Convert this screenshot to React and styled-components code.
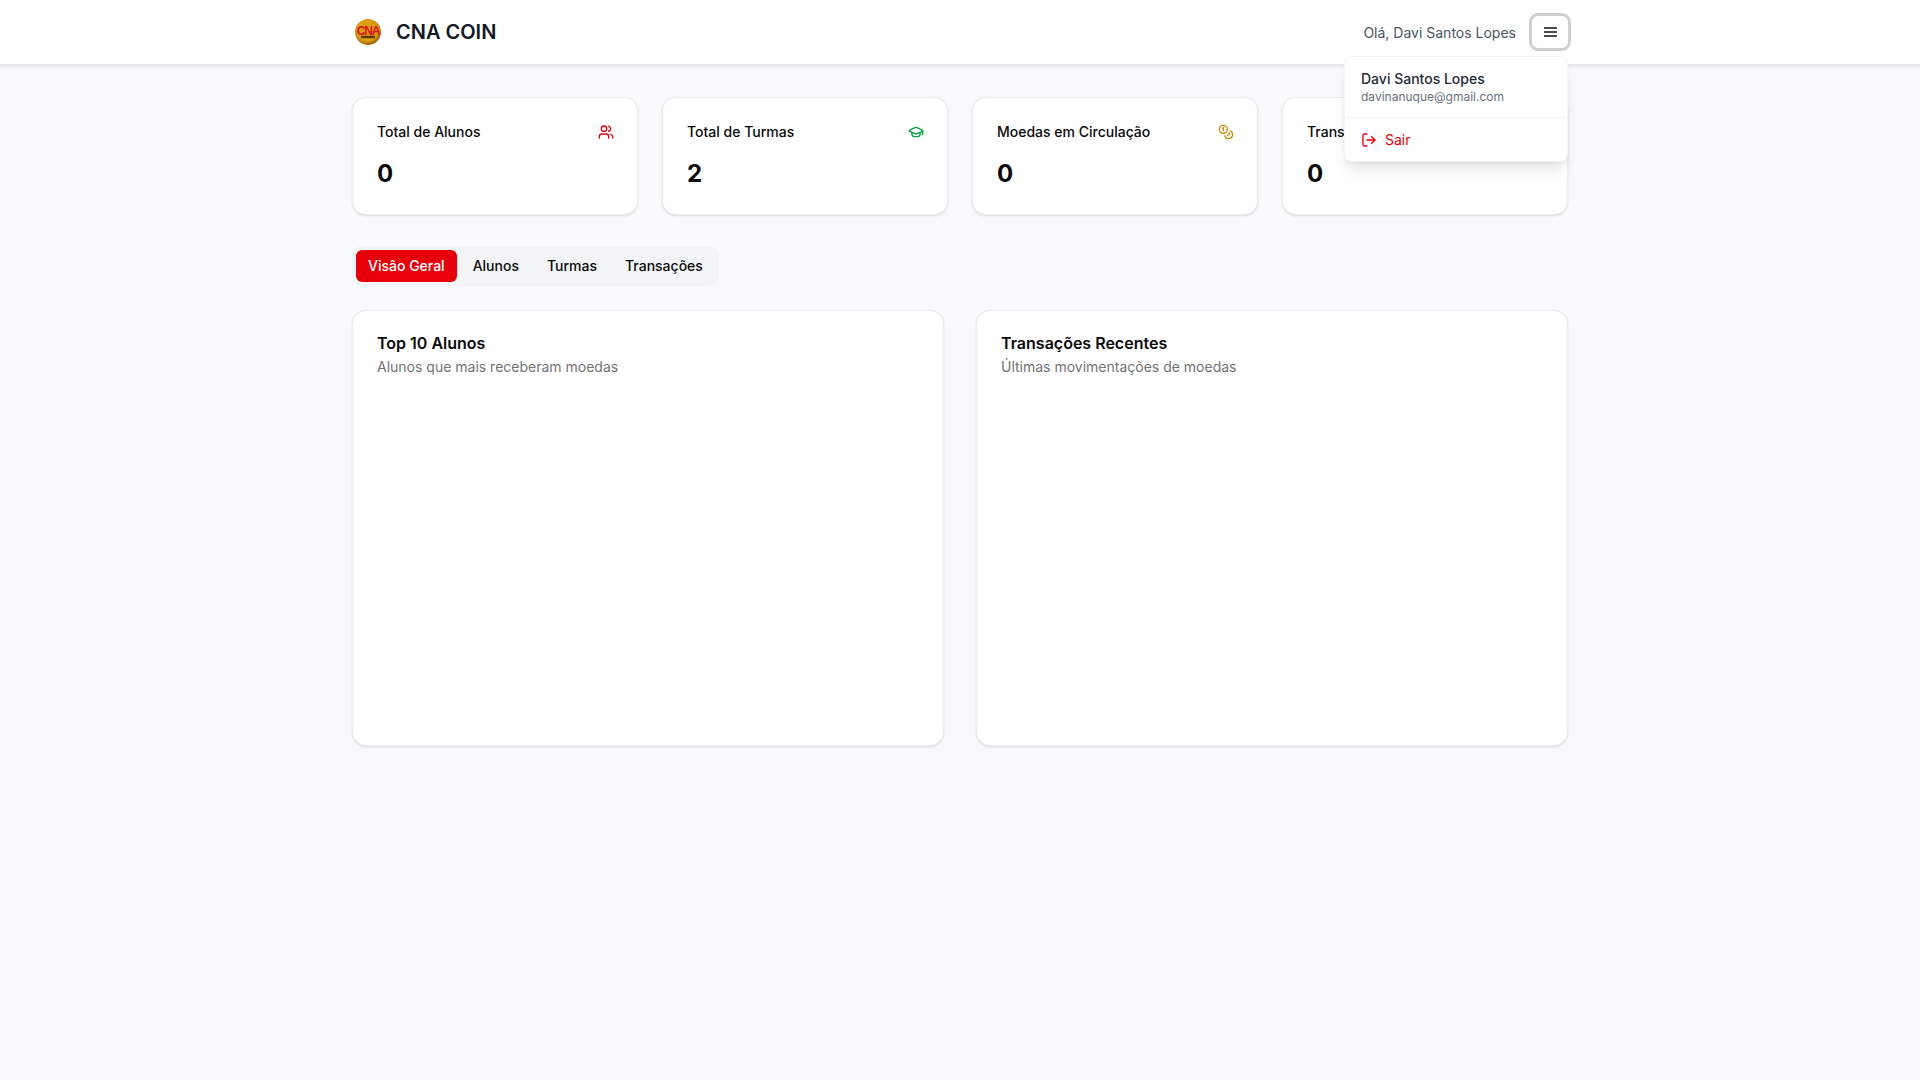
import React from "react";
import styled, { createGlobalStyle } from "styled-components";
import { Users, GraduationCap, Coins, LogOut } from "lucide-react";

const Global = createGlobalStyle`
  html, body { margin: 0; padding: 0; }
  body { background: #f9fafb; font-family: Inter, "Liberation Sans", sans-serif; color: #0a0a0a; }
  * { box-sizing: border-box; }
`;
const Page = styled.div`min-height: 1080px; background: #f9fafb;`;
const Header = styled.header`
  position: relative; height: 65px; background: #fff; border-bottom: 1px solid #e5e7eb;
  box-shadow: 0 1px 3px rgba(0,0,0,.1);
  z-index: 2;
`;
const HeaderInner = styled.div`
  position: relative; max-width: 1280px; height: 64px; margin: 0 auto; padding: 0 32px;
  display: flex; align-items: center; justify-content: space-between;
`;
const Brand = styled.div`display: flex; align-items: center; gap: 15px; padding-left: 3px;`;
const LogoMark = styled.svg`width: 26px; height: 26px; display: block;`;
const BrandName = styled.h1`margin: 0; font-size: 20px; line-height: 28px; font-weight: 600; color: #111827;`;
const UserArea = styled.div`display: flex; align-items: center; gap: 16px;`;
const Greeting = styled.span`font-size: 14px; line-height: 20px; padding-top: 1px; color: #4b5563;`;
const MenuButton = styled.button`
  width: 36px; height: 32px; padding: 0; display: flex; align-items: center; justify-content: center;
  background: #fff; border: 0; border-radius: 6px; outline: 3px solid #cfcfcf; color: #4d4d4d;
`;
const Bars = styled.svg`width: 13px; height: 10px; display: block;`;
const Dropdown = styled.div`
  position: absolute; top: 56px; right: 32px; width: 224px; z-index: 5;
  background: #fff; border: 1px solid #f3f4f6; border-radius: 8px;
  box-shadow: 0 10px 15px -3px rgba(0,0,0,.1), 0 4px 6px -4px rgba(0,0,0,.1);
`;
const DropHead = styled.div`padding: 12px 16px; border-bottom: 1px solid #f3f4f6;`;
const DropName = styled.div`font-size: 14px; line-height: 20px; font-weight: 500; color: #1f2937;`;
const DropMail = styled.div`font-size: 12px; line-height: 16px; color: #6b7280;`;
const Logout = styled.div`
  display: flex; align-items: center; gap: 8px; padding: 12px 16px 11px;
  font-size: 14px; line-height: 20px; color: #e7000b;
`;
const Main = styled.main`max-width: 1280px; margin: 0 auto; padding: 32px;`;
const Stats = styled.div`display: grid; grid-template-columns: repeat(4, 1fr); gap: 24px; margin-bottom: 31px;`;
const Card = styled.section`
  background: #fff; border: 1px solid #eceef1; border-radius: 14px;
  box-shadow: 0 1px 3px rgba(0,0,0,.1), 0 1px 2px -1px rgba(0,0,0,.1);
`;
const StatCard = styled(Card)`height: 118px; padding: 24px;`;
const StatTop = styled.div`display: flex; align-items: center; justify-content: space-between; height: 20px;`;
const StatLabel = styled.span`font-size: 14px; line-height: 20px; font-weight: 500;`;
const StatIcon = styled.span`display: flex; margin-right: -0.5px;`;
const StatValue = styled.div`margin-top: 16px; font-size: 24px; line-height: 32px; font-weight: 700;`;
const TabRow = styled.div`height: 64px;`;
const Tabs = styled.div`
  display: inline-flex; align-items: center; height: 40px; padding: 4px;
  background: #f3f4f6; border-radius: 10px; vertical-align: top;
`;
const Tab = styled.div`
  height: 32px; padding: 0 12px 1px; margin-right: 4px;
  display: flex; align-items: center; border-radius: 6px;
  font-size: 14px; font-weight: 500;
  background: ${p => (p.$active ? "#e7000b" : "transparent")};
  color: ${p => (p.$active ? "#fff" : "#0a0a0a")};
  &:last-child { margin-right: 0; }
`;
const Panels = styled.div`display: grid; grid-template-columns: repeat(2, 1fr); gap: 32px;`;
const Panel = styled(Card)`height: 436px; padding: 22px 24px 24px;`;
const PanelTitle = styled.h3`margin: 0 0 4px; font-size: 16px; line-height: 20px; font-weight: 600;`;
const PanelSub = styled.p`margin: 0; font-size: 14px; line-height: 20px; color: #737373;`;

const Logo = () => (
  <LogoMark viewBox="0 0 26 26">
    <defs>
      <radialGradient id="coin" cx="40%" cy="35%" r="70%">
        <stop offset="0%" stopColor="#f2b624" />
        <stop offset="70%" stopColor="#d18d10" />
        <stop offset="100%" stopColor="#96600a" />
      </radialGradient>
    </defs>
    <circle cx="13" cy="13" r="13" fill="url(#coin)" />
    <circle cx="13" cy="13" r="10" fill="#dc9c14" />
    <text x="13" y="15.5" textAnchor="middle" fontFamily="Liberation Sans, sans-serif" fontWeight="700" fontSize="12" letterSpacing="-1.1" fill="#dd111b">CNA</text>
    <rect x="6" y="16.8" width="14" height="2.4" fill="#5a3a08" />
  </LogoMark>
);

const stats = [
  { label: "Total de Alunos", value: "0", Icon: Users, color: "#e7000b" },
  { label: "Total de Turmas", value: "2", Icon: GraduationCap, color: "#00a63e" },
  { label: "Moedas em Circulação", value: "0", Icon: Coins, color: "#d08700" },
  { label: "Transações", value: "0", Icon: Users, color: "#e7000b" },
];

export default function App() {
  return (
    <Page>
      <Global />
      <Header>
        <HeaderInner>
          <Brand>
            <Logo />
            <BrandName>CNA COIN</BrandName>
          </Brand>
          <UserArea>
            <Greeting>Olá, Davi Santos Lopes</Greeting>
            <MenuButton aria-label="Menu">
              <Bars viewBox="0 0 13 10">
                <rect y="0" width="13" height="2" fill="currentColor" />
                <rect y="4" width="13" height="2" fill="currentColor" />
                <rect y="8" width="13" height="2" fill="currentColor" />
              </Bars>
            </MenuButton>
          </UserArea>
          <Dropdown>
            <DropHead>
              <DropName>Davi Santos Lopes</DropName>
              <DropMail>davinanuque@gmail.com</DropMail>
            </DropHead>
            <Logout><LogOut size={16} strokeWidth={2} />Sair</Logout>
          </Dropdown>
        </HeaderInner>
      </Header>
      <Main>
        <Stats>
          {stats.map(({ label, value, Icon, color }) => (
            <StatCard key={label}>
              <StatTop>
                <StatLabel>{label}</StatLabel>
                <StatIcon><Icon size={16} color={color} strokeWidth={2} /></StatIcon>
              </StatTop>
              <StatValue>{value}</StatValue>
            </StatCard>
          ))}
        </Stats>
        <TabRow>
          <Tabs>
            <Tab $active>Visão Geral</Tab>
            <Tab>Alunos</Tab>
            <Tab>Turmas</Tab>
            <Tab>Transações</Tab>
          </Tabs>
        </TabRow>
        <Panels>
          <Panel>
            <PanelTitle>Top 10 Alunos</PanelTitle>
            <PanelSub>Alunos que mais receberam moedas</PanelSub>
          </Panel>
          <Panel>
            <PanelTitle>Transações Recentes</PanelTitle>
            <PanelSub>Últimas movimentações de moedas</PanelSub>
          </Panel>
        </Panels>
      </Main>
    </Page>
  );
}
